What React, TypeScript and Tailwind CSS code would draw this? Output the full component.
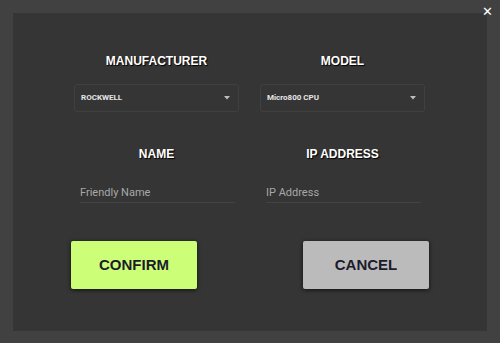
import { useState } from "react";

const heading =
  "text-center text-[12px] leading-[14px] font-bold text-white [font-family:'Liberation_Sans',Arial,sans-serif] [text-shadow:1px_1px_1px_#000]";

function Select({ value }: { value: string }) {
  return (
    <div className="flex h-[28px] w-full items-center justify-between rounded-[3px] border border-[#404040] pl-[6px] pr-[8px]">
      <span className="text-[8px] font-bold text-[#e6e6e6] [font-family:Roboto,sans-serif]">{value}</span>
      <svg width="6" height="4" viewBox="0 0 6 4">
        <path d="M0 0h6L3 3.5z" fill="#bdbdbd" />
      </svg>
    </div>
  );
}

function Field({ placeholder }: { placeholder: string }) {
  const [val, setVal] = useState("");
  return (
    <input
      value={val}
      onChange={(e) => setVal(e.target.value)}
      placeholder={placeholder}
      className="ml-[6px] w-[155px] border-b border-[#424242] bg-transparent pb-[2px] text-[11px] leading-[14px] text-white outline-none placeholder:text-[#a8a8a8] [font-family:Roboto,sans-serif]"
    />
  );
}

export default function App() {
  return (
    <div className="relative h-[343px] w-[500px] bg-[#414141] pl-[13px] pt-[13px]">
      <button className="absolute right-[7px] top-[5px] text-[13px] font-bold leading-none text-white [font-family:'DejaVu_Sans',sans-serif]">
        ✕
      </button>
      <div className="h-[318px] w-[474px] bg-[#353535] pl-[61px] pt-[41px]">
        <div className="grid w-[351px] grid-cols-[165px_165px] gap-x-[21px]">
          <div className={heading}>MANUFACTURER</div>
          <div className={heading}>MODEL</div>
          <div className="mt-[16px]">
            <Select value="ROCKWELL" />
          </div>
          <div className="mt-[16px]">
            <Select value="Micro800 CPU" />
          </div>
          <div className={`${heading} mt-[35px]`}>NAME</div>
          <div className={`${heading} mt-[35px]`}>IP ADDRESS</div>
          <div className="mt-[17px]">
            <Field placeholder="Friendly Name" />
          </div>
          <div className="mt-[17px]">
            <Field placeholder="IP Address" />
          </div>
        </div>
        <div className="ml-[-3px] mt-[38px] flex w-[358px] justify-between">
          <button className="h-[48px] w-[126px] rounded-[2px] bg-[#ccff77] text-[15px] font-bold text-[#1c1c2c] shadow-[0_1px_4px_rgba(0,0,0,0.7)] [font-family:'Liberation_Sans',Arial,sans-serif]">
            CONFIRM
          </button>
          <button className="h-[48px] w-[126px] rounded-[2px] bg-[#bbbbbb] text-[15px] font-bold text-[#1c1c2c] shadow-[0_1px_4px_rgba(0,0,0,0.7)] [font-family:'Liberation_Sans',Arial,sans-serif]">
            CANCEL
          </button>
        </div>
      </div>
    </div>
  );
}
